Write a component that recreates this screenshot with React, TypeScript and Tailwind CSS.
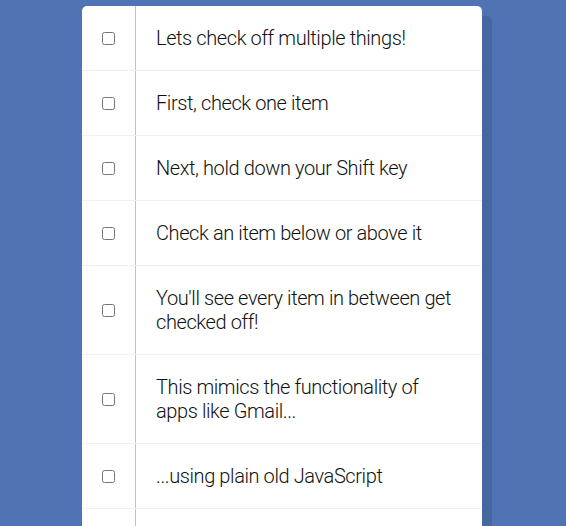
const items = [
  "Lets check off multiple things!",
  "First, check one item",
  "Next, hold down your Shift key",
  "Check an item below or above it",
  "You'll see every item in between get checked off!",
  "This mimics the functionality of apps like Gmail...",
  "...using plain old JavaScript",
]

export default function App() {
  return (
    <div className="min-h-screen bg-[#5073b4] pt-[6px] pr-[2px] font-['Roboto',sans-serif]">
      <div className="mx-auto w-[400px] rounded-[5px] bg-white shadow-[10px_10px_0_rgba(0,0,0,0.1)]">
        {items.map((text) => (
          <div key={text} className="flex items-center border-b border-[#f1f1f1]">
            <input type="checkbox" className="m-5 h-[13px] w-[13px] shrink-0" />
            <p className="flex-1 border-l border-[#f0c040] p-5 text-[20px] leading-6 font-light tracking-[-0.4px] text-[#111]">
              {text}
            </p>
          </div>
        ))}
        <div className="flex items-center border-b border-[#f1f1f1]">
          <input type="checkbox" className="m-5 h-[13px] w-[13px] shrink-0" />
          <div className="h-16 flex-1 border-l border-[#f0c040]" />
        </div>
      </div>
    </div>
  )
}
